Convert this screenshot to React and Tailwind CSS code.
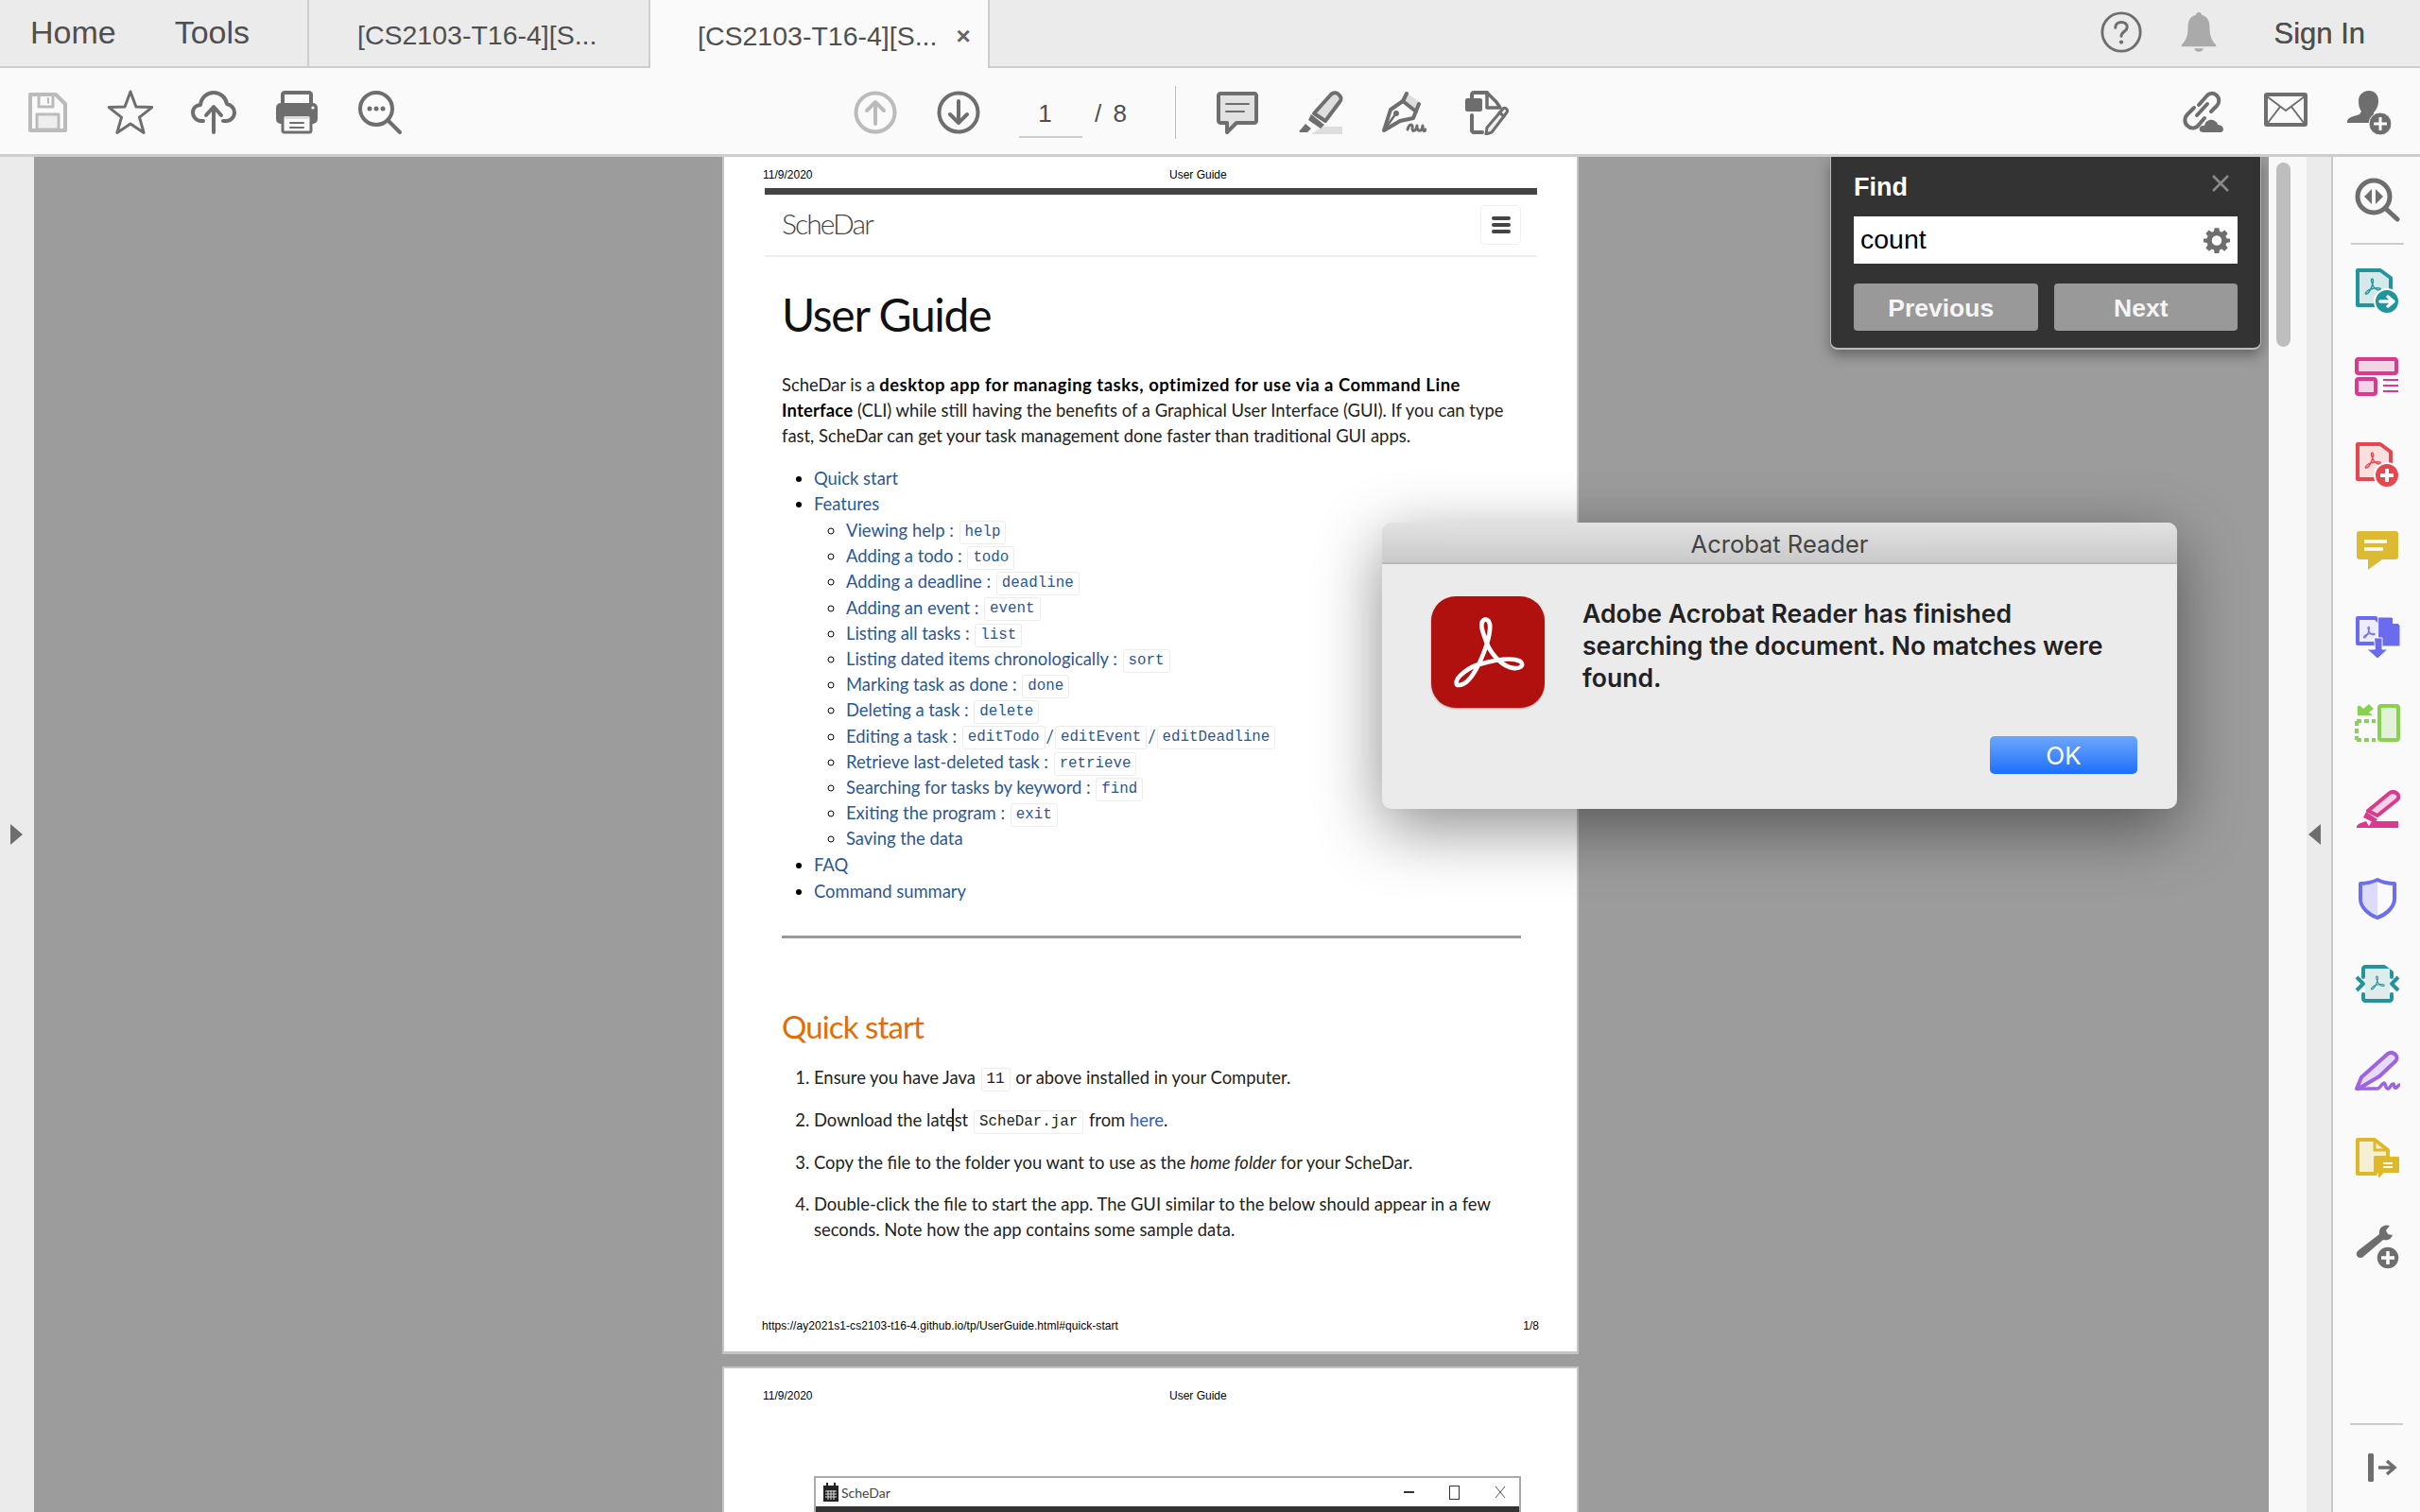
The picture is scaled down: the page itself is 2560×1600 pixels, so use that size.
import React from "react";

const GRAY = "#6e6e6e";

function Icon({ size = 48, children, className = "" }) {
  return (
    <svg width={size} height={size} viewBox="0 0 48 48" fill="none" strokeLinecap="round" strokeLinejoin="round" className={className}>
      {children}
    </svg>
  );
}

// the acrobat swirl, in 358x347 space
function PdfSwirl({ color = "#fff", width = 14 }) {
  return (
    <path
      d="M80 274 C73 252 128 217 153 212 C188 202 248 187 280 202 C298 217 278 227 258 224 C228 220 193 187 176 147 C163 112 148 77 171 70 C193 72 186 112 176 147 C163 187 128 277 88 278 C83 278 80 277 80 274 Z"
      stroke={color}
      strokeWidth={width}
      strokeLinejoin="round"
      fill="none"
    />
  );
}

function ToolBtn({ children }) {
  return <div className="w-[88px] flex justify-center shrink-0">{children}</div>;
}

function SaveIcon() {
  return (
    <Icon>
      <path d="M6 5H33L43 15V43H6Z" stroke="#bbb" strokeWidth="4" />
      <path d="M15 6V18H30V6" stroke="#bbb" strokeWidth="3" />
      <path d="M25 9V14" stroke="#bbb" strokeWidth="2" />
      <rect x="13" y="26" width="23" height="16" fill="#eee" stroke="#bbb" strokeWidth="3" />
    </Icon>
  );
}

function PageSwirlDoc({ stroke, fill, children }) {
  return (
    <Icon>
      <path d="M3 3H27L38 11V40H3Z" stroke={stroke} strokeWidth="4" fill={fill} />
      <svg x="5" y="6" width="28" height="28" viewBox="0 0 358 347">
        <PdfSwirl color={stroke} width={18} />
      </svg>
      {children}
    </Icon>
  );
}

function TopBar() {
  return (
    <div className="h-[72px] flex shrink-0 bg-[#ebebeb] border-b-2 border-[#cdcdcd] text-[#4f4f4f]">
      <div className="w-[325px] flex items-center pl-[32px] pb-[1px] gap-[62px] text-[34px] shrink-0">
        <span>Home</span>
        <span>Tools</span>
      </div>
      <div className="w-[361px] flex items-center pl-[51px] pt-[4px] text-[28.500px] border-l-2 border-[#cdcdcd] shrink-0">
        [CS2103-T16-4][S...
      </div>
      <div className="w-[361px] h-[72px] flex items-center pl-[50px] pt-[4px] text-[28.500px] bg-[#fafafa] border-x-2 border-[#cdcdcd] shrink-0">
        <span>[CS2103-T16-4][S...</span>
        <span className="ml-[20px] text-[26px] font-bold text-[#666]">×</span>
      </div>
      <div className="ml-auto flex items-center pr-[58px] pb-[2px]">
        <Icon size={46}>
          <circle cx="24" cy="24" r="21" stroke={GRAY} strokeWidth="3" />
          <path d="M17.5 19C17.5 15 20.5 13 24 13C28 13 30.5 15.5 30.5 18.5C30.5 23 24 23.5 24 28.5" stroke={GRAY} strokeWidth="3.2" />
          <circle cx="24" cy="35" r="2.2" fill={GRAY} />
        </Icon>
        <div className="ml-[36px] mr-[56px]">
          <Icon size={46}>
            <path d="M24 2C22 2 21 3 21 5C14 7 12 12 12 19C12 28 10 33 5 38V40H43V38C38 33 36 28 36 19C36 12 34 7 27 5C27 3 26 2 24 2Z" fill="#aaa" />
            <path d="M19 42H29C28 47 20 47 19 42Z" fill="#aaa" />
          </Icon>
        </div>
        <span className="text-[31px] font-medium mt-[5px] [text-shadow:0_0_0.6px_#4f4f4f]">Sign In</span>
      </div>
    </div>
  );
}

function ToolBar() {
  return (
    <div className="h-[94px] flex items-center shrink-0 bg-[#fafafa] border-b-[3px] border-[#cdcdcd] pl-[6px] pr-[10px] pt-[2px]">
      <ToolBtn><SaveIcon /></ToolBtn>
      <ToolBtn>
        <Icon>
          <path d="M24 2L29.9 17.9L46.8 18.6L33.5 29.1L38.1 45.4L24 36L9.9 45.4L14.5 29.1L1.2 18.6L18.1 17.9Z" stroke={GRAY} strokeWidth="3" />
        </Icon>
      </ToolBtn>
      <ToolBtn>
        <Icon>
          <path d="M13 33H11C5 33 2 28 2 24C2 19 6 16 10 16C11 8 17 3 24 3C31 3 37 8 38 15C43 16 46 20 46 24C46 29 42 33 37 33H34" stroke={GRAY} strokeWidth="4" />
          <path d="M24 45V19M16 27L24 18L32 27" stroke={GRAY} strokeWidth="4" />
        </Icon>
      </ToolBtn>
      <ToolBtn>
        <Icon>
          <rect x="2" y="14" width="44" height="22" rx="5" fill={GRAY} />
          <path d="M9 14V5C9 4 10 3 11 3H37C38 3 39 4 39 5V14" stroke={GRAY} strokeWidth="4" />
          <rect x="9" y="27" width="30" height="18" rx="2" fill="#fafafa" stroke={GRAY} strokeWidth="3" />
          <rect x="11" y="28" width="26" height="3" fill="#ddd" />
          <path d="M17 35H31M17 40H31" stroke={GRAY} strokeWidth="2" />
          <circle cx="41" cy="19" r="1.6" fill="#fff" />
        </Icon>
      </ToolBtn>
      <ToolBtn>
        <Icon>
          <circle cx="20" cy="20" r="17" stroke={GRAY} strokeWidth="4" />
          <circle cx="13" cy="20" r="2.5" fill={GRAY} />
          <circle cx="20" cy="20" r="2.5" fill={GRAY} />
          <circle cx="27" cy="20" r="2.5" fill={GRAY} />
          <path d="M32 32L45 45" stroke={GRAY} strokeWidth="4" />
        </Icon>
      </ToolBtn>

      <div className="ml-[436px]" />
      <ToolBtn>
        <Icon>
          <circle cx="24" cy="24" r="20.5" stroke="#bbb" strokeWidth="4" />
          <path d="M24 36V13M15 22L24 13L33 22" stroke="#bbb" strokeWidth="4" />
        </Icon>
      </ToolBtn>
      <ToolBtn>
        <Icon>
          <circle cx="24" cy="24" r="20.5" stroke={GRAY} strokeWidth="4" />
          <path d="M24 12V35M15 26L24 35L33 26" stroke={GRAY} strokeWidth="4" />
        </Icon>
      </ToolBtn>

      <div className="ml-[20px] w-[67px] h-[52px] flex items-center justify-center pr-[12px] border-b-2 border-[#cdcdcd] text-[26px] text-[#4f4f4f] shrink-0 mt-[2px] pt-[3px]">1</div>
      <span className="ml-[13px] w-[85px] text-[26px] text-[#4f4f4f] shrink-0 mt-[3px] [word-spacing:5px]">/ 8</span>
      <div className="w-px h-[56px] bg-[#bdbdbd] shrink-0" />

      <div className="ml-[21px]" />
      <ToolBtn>
        <Icon>
          <path d="M4 6C4 5 5 4 6 4H42C43 4 44 5 44 6V33C44 34 43 35 42 35H23L13 45V35H6C5 35 4 34 4 33Z" fill="#e2e2e2" stroke={GRAY} strokeWidth="4" />
          <path d="M12 15H36M12 23H31" stroke={GRAY} strokeWidth="2" />
        </Icon>
      </ToolBtn>
      <ToolBtn>
        <Icon>
          <path d="M14 47L26 39H47V47Z" fill="#ddd" />
          <path d="M35 5C38 2 42 3 44 6C46 8 46 11 44 13L29 33L17 25Z" fill="#ddd" stroke={GRAY} strokeWidth="4" />
          <path d="M14 26L28 37L24 41L11 32Z" fill={GRAY} />
          <path d="M8 36L14 41L10 45H3C1 45 1 43 3 42Z" fill={GRAY} />
        </Icon>
      </ToolBtn>
      <ToolBtn>
        <Icon>
          <path d="M28 4L42 14L37 20L24 11Z" fill="#ddd" />
          <path d="M27 4L23 12L10 21L3 43L20 33L34 30L40 15" stroke={GRAY} strokeWidth="4" />
          <path d="M23 12L37 23" stroke={GRAY} strokeWidth="4" />
          <path d="M3 43L15 26" stroke={GRAY} strokeWidth="2.5" />
          <circle cx="16" cy="25" r="3" fill={GRAY} />
          <path d="M28 42C30 35 34 36 33 41C33 45 37 44 38 38C38 45 43 45 44 38C44 44 46 45 47 42" stroke={GRAY} strokeWidth="3" />
        </Icon>
      </ToolBtn>
      <ToolBtn>
        <Icon>
          <path d="M8 13V5C8 4 9 3 10 3H24" stroke={GRAY} strokeWidth="4" />
          <rect x="1" y="9" width="18" height="14" rx="2" fill={GRAY} />
          <path d="M24 3L34 13L38 19H24Z" stroke={GRAY} strokeWidth="3.5" />
          <path d="M8 27V43C8 44 9 45 10 45H19" stroke={GRAY} strokeWidth="4" />
          <path d="M41 20C43 18 47 21 45 24L29 45L23 47L24 40Z" fill="#eee" stroke={GRAY} strokeWidth="3" />
          <path d="M37 24L42 28" stroke={GRAY} strokeWidth="3" />
        </Icon>
      </ToolBtn>

      <div className="ml-auto" />
      <ToolBtn>
        <Icon>
          <path d="M20 16L28 7C31 3 36 3 39 6C42 9 42 14 39 17L33 23" stroke={GRAY} strokeWidth="4" />
          <path d="M26 30L20 37C17 41 12 42 8 38C4 35 5 29 8 26L15 19" stroke={GRAY} strokeWidth="4" />
          <path d="M18 27L29 15" stroke={GRAY} strokeWidth="4" />
          <path d="M25 45C21 45 20 42 21 40C22 38 24 38 26 38C27 33 31 31 35 32C38 33 40 35 40 37C44 37 46 40 46 42C46 44 44 45 43 45Z" fill={GRAY} />
        </Icon>
      </ToolBtn>
      <ToolBtn>
        <Icon>
          <rect x="3" y="5" width="42" height="32" rx="1" stroke={GRAY} strokeWidth="4" />
          <path d="M4 7L24 22L44 7M5 35L18 18M43 35L30 18" stroke={GRAY} strokeWidth="2" />
        </Icon>
      </ToolBtn>
      <ToolBtn>
        <Icon>
          <path d="M24 1C30 1 34 5 34 12C34 18 31 22 29 24V28C30 29 30 29 31 29C26 32 24 36 24 35H1V33C2 29 8 28 14 26L16 23C14 20 13 17 13 12C13 5 18 1 24 1Z" fill={GRAY} />
          <circle cx="36" cy="36" r="12" fill={GRAY} stroke="#fafafa" strokeWidth="1" />
          <path d="M36 29V43M29 36H43" stroke="#fff" strokeWidth="3" strokeLinecap="butt" />
        </Icon>
      </ToolBtn>
    </div>
  );
}

function Code({ children, dark }) {
  return (
    <code
      className={`inline-block mx-[1px] px-[5px] h-[25px] leading-[23px] align-middle border border-[#ececec] rounded-[3px] font-['Liberation_Mono',monospace] text-[15.800px] ${dark ? "text-[#222]" : "text-[#2b5797]"}`}
    >
      {children}
    </code>
  );
}

const subItems = [
  ["Viewing help :", ["help"]],
  ["Adding a todo :", ["todo"]],
  ["Adding a deadline :", ["deadline"]],
  ["Adding an event :", ["event"]],
  ["Listing all tasks :", ["list"]],
  ["Listing dated items chronologically :", ["sort"]],
  ["Marking task as done :", ["done"]],
  ["Deleting a task :", ["delete"]],
  ["Editing a task :", ["editTodo", "editEvent", "editDeadline"]],
  ["Retrieve last-deleted task :", ["retrieve"]],
  ["Searching for tasks by keyword :", ["find"]],
  ["Exiting the program :", ["exit"]],
  ["Saving the data", []],
];

function PageHeader({ top = "pt-[11px]" }) {
  return (
    <div className={`h-[33px] pl-[41px] ${top} flex text-[12px] leading-[16px] font-['Liberation_Sans',sans-serif] text-black`}>
      <span className="w-[430px]">11/9/2020</span>
      <span>User Guide</span>
    </div>
  );
}

function PageOne() {
  return (
    <div className="w-[906px] -ml-[2px] h-[1267px] shrink-0 flex flex-col bg-white border-x-2 border-b-[3px] border-[#c4c4c4] font-['Lato',sans-serif] text-[#222] text-[18.400px] leading-[27.200px]">
      <PageHeader />
      <div className="ml-[43px] mr-[42px] h-[7px] bg-[#444]" />
      <div className="ml-[43px] mr-[42px] h-[66px] border-b-2 border-[#eee] flex items-center justify-between pl-[18px] pr-[17px]">
        <span className="text-[30px] font-light text-[#444] tracking-[-1.900px] -mt-[2px]">ScheDar</span>
        <div className="w-[43px] h-[42px] border border-[#eee] rounded-[5px] flex flex-col items-center justify-center gap-[3px]">
          <div className="w-[20px] h-[4px] rounded bg-[#444]" />
          <div className="w-[20px] h-[4px] rounded bg-[#444]" />
          <div className="w-[20px] h-[4px] rounded bg-[#444]" />
        </div>
      </div>

      <div className="ml-[61px] mr-[59px] flex-1 flex flex-col">
        <h1 className="mt-[31px] text-[48px] leading-[60px] tracking-[-1.300px] text-[#111]">User Guide</h1>
        <p className="mt-[31px] whitespace-nowrap">
          ScheDar is a <b className="text-black tracking-[0.550px]">desktop app for managing tasks, optimized for use via a Command Line</b><br /><b className="text-black tracking-[0.200px]">Interface</b> (CLI) while still having the benefits of a Graphical User Interface (GUI). If you can type<br />fast, ScheDar can get your task management done faster than traditional GUI apps.
        </p>
        <ul className="mt-[17px] list-disc pl-[34px] text-[#2b5797] marker:text-black">
          <li>Quick start</li>
          <li>
            Features
            <ul className="list-[circle] pl-[34px] pt-[1px] pb-[1px]">
              {subItems.map(([label, codes]) => (
                <li key={label} className="h-[27.200px] whitespace-nowrap">
                  {label}{" "}
                  {codes.map((c, i) => (
                    <React.Fragment key={c}>
                      {i > 0 && "/"}
                      <Code>{c}</Code>
                    </React.Fragment>
                  ))}
                </li>
              ))}
            </ul>
          </li>
          <li>FAQ</li>
          <li>Command summary</li>
        </ul>
        <div className="mt-[33px] h-[3px] bg-[#999]" />
        <h2 className="mt-[71px] text-[33px] leading-[44px] tracking-[-0.900px] text-[#e36c09]">Quick start</h2>
        <ol className="mt-[19px] list-decimal pl-[34px] flex flex-col gap-[17px]">
          <li>Ensure you have Java <Code dark>11</Code> or above installed in your Computer.</li>
          <li className="relative">
            Download the latest <Code dark>ScheDar.jar</Code> from <span className="text-[#2b5fc0]">here</span>.
            <div className="absolute left-[146px] top-[1px] w-[2px] h-[24px] bg-[#222]" />
          </li>
          <li>Copy the file to the folder you want to use as the <i>home folder</i> for your ScheDar.</li>
          <li>Double-click the file to start the app. The GUI similar to the below should appear in a few seconds. Note how the app contains some sample data.</li>
        </ol>
      </div>

      <div className="pl-[40px] pr-[40px] pb-[19px] flex justify-between text-[12px] leading-[16px] font-['Liberation_Sans',sans-serif] text-black">
        <span className="tracking-[0.060px]">https://ay2021s1-cs2103-t16-4.github.io/tp/UserGuide.html#quick-start</span>
        <span>1/8</span>
      </div>
    </div>
  );
}

function PageTwo() {
  return (
    <div className="w-[906px] -ml-[2px] h-[400px] shrink-0 mt-[13px] bg-white border-x-2 border-t-[2px] border-[#c4c4c4]">
      <PageHeader top="pt-[21px]" />
      <div className="ml-[95px] mt-[81px] w-[748px] h-[200px] border-2 border-[#aaa] border-b-0">
        <div className="h-[30px] flex items-center pl-[8px] pr-[14px] text-[14px] text-[#444] font-['Lato',sans-serif]">
          <svg width="16" height="20" viewBox="0 0 16 20">
            <rect x="0" y="3" width="16" height="17" fill="#222" />
            <rect x="3" y="0" width="2" height="4" fill="#222" />
            <rect x="11" y="0" width="2" height="4" fill="#222" />
            <path d="M2 9H14M2 12H14M2 15H14M5 8V18M8 8V18M11 8V18" stroke="#ddd" strokeWidth="1" />
          </svg>
          <span className="ml-[3px]">ScheDar</span>
          <div className="ml-auto flex items-center gap-[37px]">
            <div className="w-[11px] h-[2px] bg-[#333]" />
            <div className="w-[11px] h-[15px] border border-[#333]" />
            <svg width="12" height="14" viewBox="0 0 12 14"><path d="M1 1L11 13M11 1L1 13" stroke="#555" strokeWidth="1" /></svg>
          </div>
        </div>
        <div className="h-full bg-[#333]" />
      </div>
    </div>
  );
}

function FindPanel() {
  return (
    <div className="absolute left-[1900px] top-0 w-[456px] h-[204px] bg-[#333] rounded-b-[8px] border-b-2 border-x border-[#bbb] border-t-0 shadow-[0_6px_14px_rgba(0,0,0,0.35)] px-[24px] font-['Liberation_Sans',sans-serif]">
      <div className="h-[63px] flex items-center justify-between pt-[2px]">
        <span className="text-[27px] font-bold text-white">Find</span>
        <svg width="20" height="20" viewBox="0 0 20 20" className="mr-[8px] -mt-[10px]"><path d="M2 2L18 18M18 2L2 18" stroke="#8a8a8a" strokeWidth="2.5" /></svg>
      </div>
      <div className="h-[50px] bg-white flex items-center justify-between pl-[7px] pr-[8px]">
        <span className="text-[28.500px] text-black pb-[2px]">count</span>
        <svg width="28" height="28" viewBox="0 0 24 24" fill="#6e6e6e">
          <path fillRule="evenodd" d="M10 1h4l.6 3.1 1.9.8L19.1 3 22 5.900l-1.900 2.600.8 1.900L24 11v3.000l-3.100.6-.8 1.900 1.900 2.600L19.100 22l-2.600-1.900-1.900.8L14 24h-4l-.6-3.100-1.900-.8L4.900 22 2 19.100l1.900-2.600-.8-1.900L0 14v-3l3.100-.6.8-1.900L2 5.900 4.900 3l2.600 1.900 1.900-.8zM12 8a4.500 4.500 0 1 0 0 9 4.500 4.500 0 0 0 0-9z" />
        </svg>
      </div>
      <div className="mt-[21px] flex gap-[17px]">
        <div className="w-[195px] h-[50px] pt-[3px] pr-[10px] rounded-[4px] bg-[#999] flex items-center justify-center text-[26.500px] font-bold text-[#f5f5f5]">Previous</div>
        <div className="w-[195px] h-[50px] pt-[3px] pr-[10px] rounded-[4px] bg-[#999] flex items-center justify-center text-[26.500px] font-bold text-[#f5f5f5]">Next</div>
      </div>
    </div>
  );
}

function Dialog() {
  return (
    <div className="absolute left-[1426px] top-[387px] w-[841px] h-[303px] rounded-[10px] overflow-visible bg-[#ebebeb] shadow-[0_20px_70px_rgba(0,0,0,0.45)] font-['Inter',sans-serif]">
      <div className="h-[44px] pt-[4px] rounded-t-[10px] bg-gradient-to-b from-[#e2e2e2] to-[#cacaca] border-b-2 border-[#b8b8b8] flex items-center justify-center text-[25.500px] text-[#444]">
        Acrobat Reader
      </div>
      <div className="flex pl-[52px] pt-[34px]">
        <div className="w-[120px] h-[118px] rounded-[26px] bg-[#b0100e] shrink-0 shadow-[0_1px_2px_rgba(0,0,0,0.3)]">
          <svg width="120" height="118" viewBox="0 0 358 347"><PdfSwirl /></svg>
        </div>
        <p className="ml-[40px] mt-[1px] whitespace-nowrap text-[26.600px] leading-[34px] font-semibold text-[#222]">
          Adobe Acrobat Reader has finished<br />searching the document. No matches were<br />found.
        </p>
      </div>
      <div className="absolute right-[42px] bottom-[37px] w-[156px] h-[40px] rounded-[5px] bg-gradient-to-b from-[#6ca6fb] to-[#1a6ffa] flex items-center justify-center text-[26px] text-white">OK</div>
    </div>
  );
}

function RailIcon({ children }) {
  return <div className="h-[92px] w-[56px] flex items-center justify-center">{children}</div>;
}

function RightPanel() {
  return (
    <div className="w-[94px] shrink-0 border-l-2 border-[#c8c8c8] bg-[#fafafa] flex flex-col items-center">
      <div className="h-[93px] w-[56px] flex items-center justify-center border-b-2 border-[#cdcdcd] ml-[2px]">
        <Icon>
          <circle cx="20" cy="20" r="17" stroke={GRAY} strokeWidth="5" />
          <path d="M18 12V28L10 20ZM22 12V28L30 20Z" fill={GRAY} />
          <path d="M33 33L45 44" stroke={GRAY} strokeWidth="5" />
        </Icon>
      </div>
      <div className="flex flex-col items-center pl-[2px] pt-[2px]">
        <RailIcon><PageSwirlDoc stroke="#22959c" fill="#d6e9ea">
          <circle cx="34" cy="36" r="13" fill="#22959c" stroke="#fafafa" strokeWidth="2" />
          <path d="M27 36H40M35 31L41 36L35 41" stroke="#fff" strokeWidth="3.5" />
        </PageSwirlDoc></RailIcon>
        <RailIcon>
          <Icon>
            <rect x="2" y="5" width="42" height="15" rx="2" fill="#f3d4e6" stroke="#d93a8e" strokeWidth="4" />
            <rect x="2" y="26" width="20" height="16" rx="2" fill="#f3d4e6" stroke="#d93a8e" strokeWidth="4" />
            <path d="M30 27H46M30 33H46M30 39H46" stroke="#d93a8e" strokeWidth="2" strokeLinecap="butt" />
          </Icon>
        </RailIcon>
        <RailIcon><PageSwirlDoc stroke="#e5474f" fill="#fadfdf">
          <circle cx="34" cy="36" r="13" fill="#e5474f" stroke="#fafafa" strokeWidth="2" />
          <path d="M34 29V43M27 36H41" stroke="#fff" strokeWidth="4" strokeLinecap="butt" />
        </PageSwirlDoc></RailIcon>
        <RailIcon>
          <Icon>
            <path d="M5 3H43C45 3 46 4 46 6V30C46 32 45 33 43 33H29L14 44V33H5C3 33 2 32 2 30V6C2 4 3 3 5 3Z" fill="#dcbb33" />
            <path d="M10 14H34M10 22H30" stroke="#fff" strokeWidth="3.5" strokeLinecap="butt" />
          </Icon>
        </RailIcon>
        <RailIcon>
          <Icon>
            <path d="M3 3H22L27 8V30H3Z" stroke="#6a6ced" strokeWidth="4" fill="#ececfc" />
            <svg x="5" y="8" width="20" height="20" viewBox="0 0 358 347"><PdfSwirl color="#6a6ced" width={20} /></svg>
            <path d="M25 2H39L48 11V33H25Z" fill="#6a6ced" stroke="#fafafa" strokeWidth="1" />
            <path d="M40 2L47 9H40Z" fill="#fafafa" />
            <path d="M21 24H29V36H35L24 46L13 36H21Z" fill="#6a6ced" stroke="#fafafa" strokeWidth="1" />
          </Icon>
        </RailIcon>
        <RailIcon>
          <Icon>
            <rect x="26" y="4" width="20" height="36" rx="2" fill="#e3f1d8" stroke="#87d24f" strokeWidth="4" />
            <path d="M2 20H22M2 40H22M2 20V40" stroke="#87d24f" strokeWidth="4" strokeDasharray="5 3" strokeLinecap="butt" />
            <path d="M3 4V14H19L15 11L20 7L15 2L9 7L6 4Z" fill="#87d24f" />
          </Icon>
        </RailIcon>
        <RailIcon>
          <Icon>
            <path d="M37 4C40 2 43 3 45 5C47 7 47 10 44 12L24 28L14 23Z" fill="#f3d4e6" stroke="#d93a8e" strokeWidth="4" />
            <path d="M12 24L24 32L21 36L9 30Z" fill="#d93a8e" />
            <path d="M2 40C2 38 4 37 6 36L12 34L16 41H2ZM18 34H46V41H14Z" fill="#d93a8e" />
          </Icon>
        </RailIcon>
        <RailIcon>
          <Icon>
            <path d="M24 4C30 7 36 8 42 8V24C42 33 33 41 24 44C15 41 6 33 6 24V8C12 8 18 7 24 4Z" stroke="#6b6eee" strokeWidth="4" />
            <path d="M24 6C19 8 13 10 8 10V24C8 32 16 39 24 42Z" fill="#dcdcfa" />
          </Icon>
        </RailIcon>
        <RailIcon>
          <Icon>
            <path d="M9 15V6C9 5 10 4 11 4H31L39 10V15M39 33V38C39 39 38 40 37 40H11C10 40 9 39 9 38V33" stroke="#22959c" strokeWidth="4" />
            <rect x="11" y="6" width="26" height="32" fill="#dfecec" />
            <svg x="12" y="9" width="24" height="24" viewBox="0 0 358 347"><PdfSwirl color="#22959c" width={16} /></svg>
            <path d="M2 15L9 22L2 29M46 15L39 22L46 29" stroke="#22959c" strokeWidth="4" strokeLinecap="butt" />
          </Icon>
        </RailIcon>
        <RailIcon>
          <Icon>
            <path d="M35 4C38 2 41 3 43 5C45 7 45 10 43 12L26 28L4 41H2L7 29Z" fill="#e6dbf8" stroke="#9e63e0" strokeWidth="4" />
            <path d="M3 41H24C27 41 28 36 31 35C33 35 32 41 35 41C38 41 38 35 41 36C42 37 41 41 44 40L47 37" stroke="#9e63e0" strokeWidth="3.5" />
          </Icon>
        </RailIcon>
        <RailIcon>
          <Icon>
            <path d="M3 3H21L35 14V22H22V39H3Z" fill="#f5efd3" stroke="#e0b92a" strokeWidth="4" />
            <path d="M21 3V14H35" stroke="#e0b92a" strokeWidth="3" />
            <path d="M24 22H46V37H30L26 42V37H24Z" fill="#e0b92a" stroke="#e0b92a" strokeWidth="2" />
            <path d="M30 28H40M30 32H40" stroke="#fff" strokeWidth="2" strokeLinecap="butt" />
          </Icon>
        </RailIcon>
        <RailIcon>
          <Icon>
            <path d="M37 2C31 0 25 4 26 11L4 28C0 31 2 36 6 36C8 36 9 35 10 34L30 17C34 18 38 17 40 12L35 11L33 7Z" fill={GRAY} />
            <circle cx="35" cy="36" r="12" fill={GRAY} stroke="#fafafa" strokeWidth="1.5" />
            <path d="M35 29V43M28 36H42" stroke="#fff" strokeWidth="3.5" strokeLinecap="butt" />
          </Icon>
        </RailIcon>
      </div>
      <div className="mt-auto w-[56px] border-t-2 border-[#cdcdcd] h-[94px] pt-[29px] pl-[18px]">
        <svg width="32" height="32" viewBox="0 0 32 32">
          <rect x="1" y="1" width="6" height="30" rx="1.500" fill={GRAY} />
          <path d="M12 16H28M21 9L29 16L21 23" stroke={GRAY} strokeWidth="3.500" fill="none" />
        </svg>
      </div>
    </div>
  );
}

export default function App() {
  return (
    <div className="w-[2560px] h-[1600px] flex flex-col overflow-hidden font-['Liberation_Sans',sans-serif]">
      <TopBar />
      <ToolBar />
      <div className="flex-1 flex min-h-0">
        <div className="w-[36px] shrink-0 bg-[#ebebeb] flex items-center pl-[11px]">
          <div className="w-0 h-0 border-y-[11px] border-y-transparent border-l-[13px] border-l-[#6e6e6e]" />
        </div>
        <div className="flex-1 relative bg-[#9c9c9c] flex flex-col items-center min-w-0 overflow-hidden">
          <PageOne />
          <PageTwo />
          <FindPanel />
          <Dialog />
        </div>
        <div className="w-[40px] shrink-0 bg-[#f8f8f8] pl-[8px] pt-[6px]">
          <div className="w-[15px] h-[195px] rounded-full bg-[#bebebe]" />
        </div>
        <div className="w-[26px] shrink-0 bg-[#ebebeb] flex items-center pl-[2px]">
          <div className="w-0 h-0 border-y-[11px] border-y-transparent border-r-[13px] border-r-[#6e6e6e]" />
        </div>
        <RightPanel />
      </div>
    </div>
  );
}
